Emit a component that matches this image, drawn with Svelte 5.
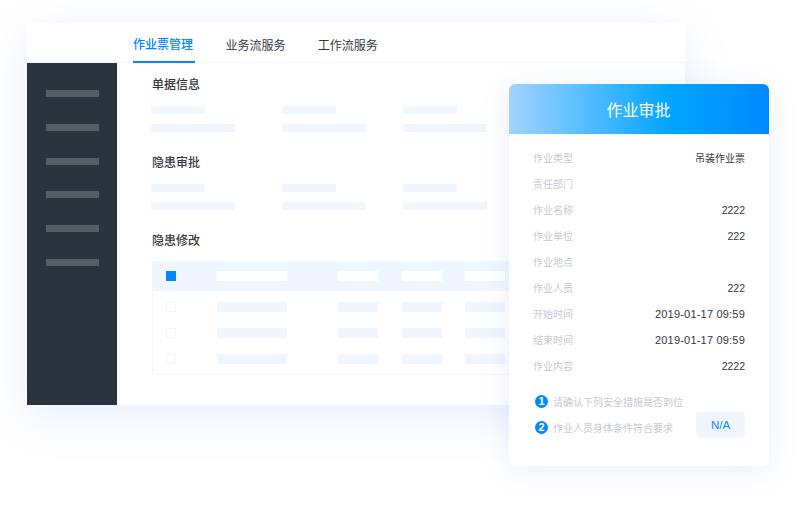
<script>
  const tabs = ['作业票管理', '业务流服务', '工作流服务'];
  const menu = [0, 1, 2, 3, 4, 5];
  const sections = ['单据信息', '隐患审批'];
  const tableRows = [0, 1, 2];
  const fields = [
    ['作业类型', '吊装作业票', 'cjk'],
    ['责任部门', '', ''],
    ['作业名称', '2222', 'num'],
    ['作业单位', '222', 'num'],
    ['作业地点', '', ''],
    ['作业人员', '222', 'num'],
    ['开始时间', '2019-01-17 09:59', ''],
    ['结束时间', '2019-01-17 09:59', ''],
    ['作业内容', '2222', 'num']
  ];
</script>

<div class="stage">
  <div class="window">
    <nav class="tabs">
      {#each tabs as tab, i}
        <span class="tab" class:active={i === 0}>{tab}</span>
      {/each}
    </nav>
    <div class="body">
      <aside class="sidebar">
        {#each menu as m}
          <div class="menu-bar"></div>
        {/each}
      </aside>
      <main class="content">
        {#each sections as title}
          <section class="section">
            <h3>{title}</h3>
            <div class="skeleton">
              <i class="s"></i><i class="s"></i><i class="s"></i>
              <i class="l"></i><i class="l"></i><i class="l"></i>
            </div>
          </section>
        {/each}
        <h3>隐患修改</h3>
        <div class="table">
          <div class="row head">
            <span class="check on"></span>
            <i class="c1"></i><i class="c2"></i><i class="c3"></i><i class="c4"></i>
          </div>
          {#each tableRows as r}
            <div class="row">
              <span class="check"></span>
              <i class="c1"></i><i class="c2"></i><i class="c3"></i><i class="c4"></i>
            </div>
          {/each}
        </div>
      </main>
    </div>
  </div>

  <div class="card">
    <header class="card-head">作业审批</header>
    <div class="fields">
      {#each fields as [label, value, kind]}
        <div class="field">
          <span class="label">{label}</span>
          <span class="value {kind}">{value}</span>
        </div>
      {/each}
    </div>
    <div class="steps">
      <div class="step-list">
        <div class="step"><b>1</b>请确认下列安全措施是否到位</div>
        <div class="step"><b>2</b>作业人员身体条件符合要求</div>
      </div>
      <button class="na">N/A</button>
    </div>
  </div>
</div>

<style>
  :global(body) {
    margin: 0;
    background: #fff;
    font-family: "Noto Sans CJK SC", "Noto Sans", sans-serif;
  }
  .stage {
    position: relative;
    width: 806px;
    height: 507px;
    padding: 23px 0 0 27px;
    box-sizing: border-box;
    overflow: hidden;
  }
  .window {
    width: 658px;
    height: 382px;
    background: #fff;
    display: flex;
    flex-direction: column;
    box-shadow: 0 12px 44px rgba(90, 125, 225, 0.14);
  }
  .tabs {
    height: 40px;
    box-sizing: border-box;
    flex: none;
    display: flex;
    gap: 30.4px;
    padding-left: 106px;
    border-bottom: 1px solid #f1f6fe;
  }
  .tab {
    width: 62px;
    height: 40px;
    box-sizing: border-box;
    font-size: 12px;
    line-height: 43px;
    color: #333743;
    white-space: nowrap;
  }
  .tab.active {
    color: #0089ff;
    font-weight: 500;
    line-height: 41px;
    border-bottom: 2px solid #0089ff;
  }
  .body {
    flex: 1;
    display: flex;
    min-height: 0;
  }
  .sidebar {
    width: 90px;
    flex: none;
    background: #2a343e;
    padding: 27px 0 0 19px;
    box-sizing: border-box;
    display: flex;
    flex-direction: column;
    gap: 26.8px;
  }
  .menu-bar {
    width: 53px;
    height: 7px;
    background: #545f67;
  }
  .content {
    flex: 1;
    padding: 13px 0 0 35px;
  }
  h3 {
    margin: 0;
    font-size: 12px;
    line-height: 16px;
    font-weight: 500;
    color: #333743;
  }
  .section {
    height: 78px;
  }
  .skeleton {
    margin: 14px 0 0 -1px;
    display: grid;
    grid-template-columns: 131px 121px 84px;
    row-gap: 10px;
  }
  .skeleton i {
    height: 8px;
    background: #f1f6fe;
  }
  .skeleton .s { width: 54px; }
  .skeleton .l { width: 84px; }
  .table {
    margin-top: 13px;
    width: 520px;
    height: 114px;
    box-sizing: border-box;
    border: 1px solid #f1f6fe;
    border-top: 0;
  }
  .row {
    height: 26px;
    display: flex;
    align-items: center;
    padding-left: 13px;
  }
  .row.head {
    height: 30px;
    margin: 0 -1px 3px -1px;
    padding-left: 14px;
    background: #f1f6fe;
  }
  .row i {
    height: 10px;
    background: #f1f6fe;
    flex: none;
  }
  .head i { background: #fff; }
  .c1 { width: 70px; margin-left: 41px; }
  .c2 { width: 40px; margin-left: 51px; }
  .c3 { width: 40px; margin-left: 24px; }
  .c4 { width: 40px; margin-left: 23px; }
  .check {
    width: 10px;
    height: 10px;
    box-sizing: border-box;
    flex: none;
    border: 1px solid #f1f6fe;
  }
  .check.on {
    background: #0089ff;
    border: 0;
  }
  .card {
    position: absolute;
    left: 509px;
    top: 84px;
    width: 260px;
    height: 382px;
    background: #fff;
    border-radius: 6px;
    box-shadow: 0 4px 30px rgba(90, 125, 225, 0.13);
    overflow: hidden;
  }
  .card-head {
    height: 50px;
    line-height: 50px;
    padding-right: 1px;
    text-align: center;
    color: #fff;
    font-size: 16px;
    background: linear-gradient(90deg, #a2d3ff 0%, #00a5ff 62%, #0089ff 100%);
  }
  .fields {
    padding: 11px 24px 0;
  }
  .field {
    height: 26px;
    display: flex;
    justify-content: space-between;
    align-items: center;
    font-size: 10px;
  }
  .label {
    margin-top: -2px;
    color: #c6c9d6;
  }
  .value {
    color: #333743;
    font-family: "Liberation Sans", "Noto Sans CJK SC", sans-serif;
    font-size: 11px;
    letter-spacing: 0.2px;
  }
  .value.num {
    font-size: 10.5px;
    letter-spacing: 0;
  }
  .value.cjk {
    font-family: "Noto Sans CJK SC", sans-serif;
    font-size: 10px;
    letter-spacing: 0;
    margin-top: -2px;
  }
  .steps {
    display: flex;
    justify-content: space-between;
    align-items: flex-end;
    padding: 9px 24px 0 26px;
  }
  .step {
    height: 26px;
    display: flex;
    align-items: center;
    gap: 5px;
    font-size: 10px;
    color: #c6c9d6;
    white-space: nowrap;
    width: 150px;
  }
  .step b {
    width: 13px;
    height: 13px;
    flex: none;
    border-radius: 50%;
    background: #0089ff;
    color: #fff;
    font: 700 11px/13px "Liberation Sans", sans-serif;
    text-align: center;
  }
  .na {
    width: 49px;
    height: 26px;
    margin-bottom: 2px;
    border: 0;
    padding: 0;
    border-radius: 4px;
    background: #f1f6fe;
    color: #0089ff;
    font: 11.5px "Liberation Sans", sans-serif;
  }
</style>
